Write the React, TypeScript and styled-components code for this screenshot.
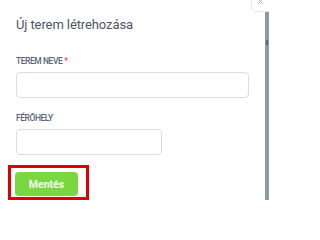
import React from "react";
import styled, { createGlobalStyle } from "styled-components";
import { X } from "lucide-react";

const Global = createGlobalStyle`
  html, body { margin: 0; padding: 0; background: #ffffff; }
  body { font-family: Roboto, "Noto Sans", "Liberation Sans", sans-serif; }
  * { box-sizing: border-box; }
`;

const Page = styled.div`
  position: relative;
  width: 269px;
  height: 200px;
  overflow: hidden;
  display: flex;
  background: #ffffff;
`;

const Modal = styled.div`
  flex: 1;
  display: flex;
  flex-direction: column;
  padding: 17px 16px 0 16px;
  background: #ffffff;
`;

const Backdrop = styled.div`
  width: 4px;
  background: #8d98a9;
  position: relative;
`;

const BackdropMark = styled.div`
  position: absolute;
  left: 1px;
  top: 40px;
  width: 2px;
  height: 5px;
  background: #5d6878;
`;

const CloseButton = styled.button`
  position: absolute;
  top: -9px;
  left: 251px;
  width: 24px;
  height: 21px;
  padding: 0 6px 5px 0;
  display: flex;
  align-items: flex-end;
  justify-content: center;
  background: #ffffff;
  border: 1px solid #e3e7ec;
  border-radius: 0 0 0 5px;
  color: #9aa4b2;
`;

const Title = styled.h2`
  margin: 0;
  font-size: 13px;
  line-height: 16px;
  font-weight: 400;
  color: #4b5566;
  letter-spacing: -0.1px;
`;

const Field = styled.div<{ $top: number }>`
  display: flex;
  flex-direction: column;
  margin-top: ${(p) => p.$top}px;
`;

const Label = styled.label`
  font-size: 8.5px;
  line-height: 11px;
  font-weight: 500;
  text-transform: uppercase;
  color: #5b6577;
  letter-spacing: -0.45px;
  margin-bottom: 5px;
`;

const Required = styled.span`
  color: #e5484d;
  margin-left: 2px;
`;

const Input = styled.input<{ $width: number }>`
  width: ${(p) => p.$width}px;
  height: 26px;
  border: 1px solid #d9dee5;
  border-radius: 4px;
  background: #ffffff;
  outline: none;
  padding: 0 8px;
  font-family: inherit;
`;

const Highlight = styled.div`
  align-self: flex-start;
  margin: 10px 0 0 -8px;
  border: 3px solid #e10000;
  padding: 4px 8px 1px 4px;
  display: flex;
`;

const SaveButton = styled.button`
  width: 63px;
  height: 24px;
  border: none;
  border-radius: 4px;
  background: #79d73f;
  color: #f4fcee;
  font-family: Roboto, "Liberation Sans", sans-serif;
  font-size: 10.5px;
  font-weight: 700;
  padding: 0;
`;

export default function App() {
  return (
    <>
      <Global />
      <Page>
        <Modal>
          <Title>Új terem létrehozása</Title>
          <Field $top={23}>
            <Label>
              Terem neve<Required>*</Required>
            </Label>
            <Input $width={233} />
          </Field>
          <Field $top={15}>
            <Label>Férőhely</Label>
            <Input $width={146} />
          </Field>
          <Highlight>
            <SaveButton>Mentés</SaveButton>
          </Highlight>
        </Modal>
        <Backdrop>
          <BackdropMark />
        </Backdrop>
        <CloseButton aria-label="Bezárás">
          <X size={9} strokeWidth={2.2} />
        </CloseButton>
      </Page>
    </>
  );
}
